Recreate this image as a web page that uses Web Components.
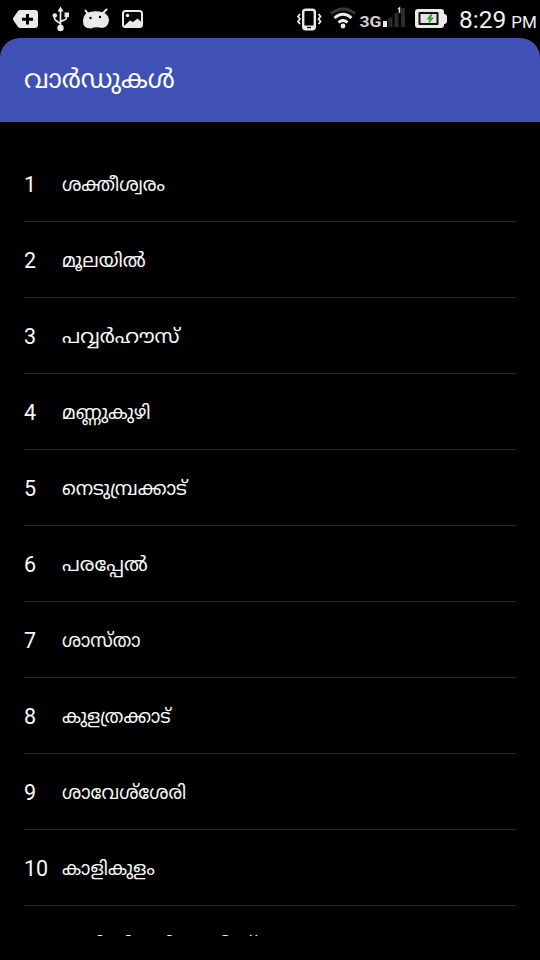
<!DOCTYPE html>
<html lang="ml"><head><meta charset="utf-8"><title>വാർഡുകൾ</title>
<style>
html,body{margin:0;background:#000;height:960px;overflow:hidden}
</style></head><body>
<ward-screen></ward-screen>
<script>
class StatusBar extends HTMLElement{
  constructor(){super();this.attachShadow({mode:'open'}).innerHTML=`
<style>
:host{display:flex;height:38px;background:#000;color:#f0f0f0;align-items:center;position:relative}
svg{display:block;width:450px;height:38px;flex:none}
.time{font:24.5px/38px Roboto,sans-serif;margin-left:9px;white-space:nowrap;padding-top:3px}
small{font-size:17px;margin-left:5px}
</style>
<svg viewBox="0 0 450 38" fill="#eaeaea">
<path d="M20 10H35Q38 10 38 13V25Q38 28 35 28H20Q19 28 18 27L13.500 20.500Q12.500 19 13.500 17.500L18 11Q19 10 20 10Z"/>
<path d="M27.500 14V24.500M22 19.300H33" stroke="#000" stroke-width="3"/>
<g stroke="#eaeaea" stroke-width="1.700" fill="none"><path d="M60.500 11V27M54.500 16V18.500Q54.500 20 60.500 23.500M66.500 15V18Q66.500 19.500 60.500 21.500"/></g>
<path d="M60.500 6.500L63.500 11.500H57.500Z"/><circle cx="60.500" cy="28" r="3.200"/><circle cx="54.800" cy="15.500" r="2.300"/><rect x="64.500" y="12.500" width="4.500" height="4.500"/>
<path d="M86.500 13Q94 10 104 12.500Q109 15.500 109 20.500Q108 27.500 102 28Q96 26.500 91 28.500Q83 28.500 83 21.500Q83 16 86.500 13Z"/>
<path d="M88 14L85.500 10.500M103 13L106.500 9.500" stroke="#eaeaea" stroke-width="2" stroke-linecap="round"/>
<circle cx="90.500" cy="18" r="1.200" fill="#000"/><circle cx="100" cy="17" r="1.200" fill="#000"/>
<rect x="123" y="11" width="19" height="16" rx="2.500" fill="none" stroke="#eaeaea" stroke-width="2"/>
<path d="M124 26L130 20.500L133 22L137.500 18.500L142 22.500V27H124Z"/><circle cx="127.500" cy="15.500" r="1.800"/>
<rect x="303.200" y="9.700" width="11.600" height="19.600" rx="2.500" fill="none" stroke="#eaeaea" stroke-width="2.400"/>
<path d="M303 25.500H315V29H303Z"/><path d="M307 27.500H311" stroke="#000" stroke-width="1.300"/>
<path d="M300 14L298 16.500L300 19L298 21.500L300 24M318.500 14L320.500 16.500L318.500 19L320.500 21.500L318.500 24" fill="none" stroke="#eaeaea" stroke-width="1.800"/>
<g fill="none" stroke-width="3"><path d="M331 13.500Q343.500 4.500 355 13.500" stroke="#383838"/><path d="M334.500 18Q343 10.500 351.500 18M338.500 22.500Q343 18.500 347.500 22.500" stroke="#eaeaea"/></g><circle cx="343" cy="26" r="2.400"/>
<text x="359.500" y="26.500" font-family="Roboto,sans-serif" font-weight="700" font-size="15.500" textLength="22" lengthAdjust="spacingAndGlyphs" fill="#d0d0d0">3G</text>
<rect x="383" y="21" width="4" height="6"/>
<g fill="#2c2c2c"><rect x="388.500" y="17.500" width="4" height="9.500"/><rect x="394.500" y="13" width="4" height="14"/><rect x="401" y="8" width="4" height="19"/></g><path d="M398 9L399.500 8V13" stroke="#ddd" stroke-width="1.500" fill="none"/>
<path d="M418 9H441Q444 9 444 12V14Q447 14 447 17V21Q447 24 444 24V25Q444 28 441 28H418Q415 28 415 25V12Q415 9 418 9Z"/>
<rect x="418.500" y="12" width="20" height="13" rx="1" fill="#111"/><rect x="420.500" y="14" width="16" height="9" fill="#e4e4e4"/><path d="M431 13.500L426.500 19.500H429L428.500 24L434 17.500H431L432.500 14Z" fill="#30a72f"/>
</svg><div class="time">8:29<small>PM</small></div>`}
}
class AppHeader extends HTMLElement{
  constructor(){super();this.attachShadow({mode:'open'}).innerHTML=`
<style>:host{display:flex;box-sizing:border-box;height:84px;padding:4px 24px 0;align-items:center;background:#3f51b5;border-radius:20px 20px 0 0;color:#fff;font:400 26px/40px "Noto Sans Malayalam","Noto Sans",sans-serif}</style><fit-text w="151"><slot></slot></fit-text>`}
}
/* Text condensed or widened horizontally to a given advance. */
class FitText extends HTMLElement{
  constructor(){super();this.attachShadow({mode:'open'}).innerHTML=`
<style>:host{display:block;white-space:nowrap}span{display:inline-block;transform-origin:0 50%}</style><span><slot></slot></span>`}
  fit(){const s=this.shadowRoot.querySelector('span');const n=s.offsetWidth;if(n)s.style.transform='scaleX('+this.getAttribute('w')/n+')'}
  connectedCallback(){requestAnimationFrame(()=>this.fit())}
}
class WardRow extends HTMLElement{
  connectedCallback(){this.attachShadow({mode:'open'}).innerHTML=`
<style>:host{display:grid;grid-template-columns:38px 1fr;box-sizing:border-box;height:76px;padding-top:2px;border-bottom:1px solid #292929;align-items:center;color:#f8f8f8;font:400 19.500px/30px "Noto Sans Malayalam","Noto Sans",sans-serif}.n{font:21.500px/30px Roboto,sans-serif}fit-text{padding-top:3px}</style>
<span class="n">${this.getAttribute('n')}</span><fit-text w="${this.getAttribute('w')}"><slot></slot></fit-text>`}
}
class WardScreen extends HTMLElement{
  constructor(){super();
  const rows=[['ശക്തീശ്വരം',103],['മൂലയിൽ',83.5],['പവ്വർഹൗസ്',117],['മണ്ണുകുഴി',89],['നെടുമ്പ്രക്കാട്',124.5],['പരപ്പേൽ',85.5],['ശാസ്\u200cതാ',79],['കുളത്രക്കാട്',109],['ശാവേശ്\u200cശേരി',124],['കാളികുളം',92.5],['മുനിസിപ്പൽ ഓഫീസ്',194]];
  this.attachShadow({mode:'open'}).innerHTML=`
<style>:host{display:flex;flex-direction:column;height:960px;background:#000}main{box-sizing:border-box;height:814px;padding:24px 24px 0;overflow:hidden;flex:none}</style>
<status-bar></status-bar><app-header>വാർഡുകൾ</app-header><main>${rows.map((r,i)=>`<ward-row n="${i+1}" w="${r[1]}">${r[0]}</ward-row>`).join('')}</main>`}
}
customElements.define('fit-text',FitText);
customElements.define('status-bar',StatusBar);
customElements.define('app-header',AppHeader);
customElements.define('ward-row',WardRow);
customElements.define('ward-screen',WardScreen);
</script></body></html>
